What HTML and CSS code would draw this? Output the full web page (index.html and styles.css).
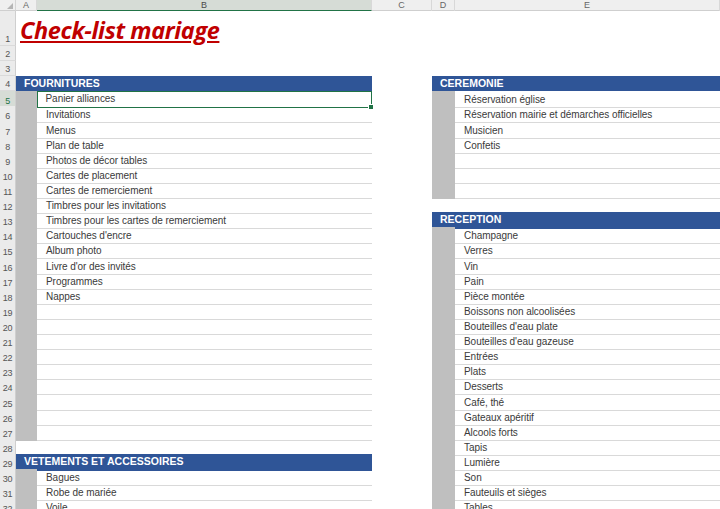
FILE: index.html
```html
<!DOCTYPE html>
<html lang="fr">
<head>
<meta charset="utf-8">
<title>Check-list mariage</title>
<link rel="stylesheet" href="styles.css">
</head>
<body>
<div class="sheet">
  <div class="colhead">
    <div class="corner"><svg width="16" height="11" viewBox="0 0 16 11"><polygon points="13,3 13,9 7,9" fill="#b4b4b4"/></svg></div>
    <div class="ch">A</div><div class="ch sel">B</div><div class="ch">C</div><div class="ch">D</div><div class="ch">E</div>
  </div>

  <div class="row r1"><div class="rh">1</div><div class="c a"><span class="title">Check-list mariage</span></div><div class="c"></div><div class="c"></div><div class="c"></div><div class="c"></div></div>
  <div class="row"><div class="rh">2</div><div class="c"></div><div class="c"></div><div class="c"></div><div class="c"></div><div class="c"></div></div>
  <div class="row"><div class="rh">3</div><div class="c"></div><div class="c"></div><div class="c"></div><div class="c"></div><div class="c"></div></div>
  <div class="row"><div class="rh">4</div><div class="c hdr">FOURNITURES</div><div class="c"></div><div class="c hdr">CEREMONIE</div></div>
  <div class="row"><div class="rh selr">5</div><div class="c gray"></div><div class="c item selcell">Panier alliances<span class="handle"></span></div><div class="c"></div><div class="c gray"></div><div class="c item">Réservation église</div></div>
  <div class="row"><div class="rh">6</div><div class="c gray"></div><div class="c item">Invitations</div><div class="c"></div><div class="c gray"></div><div class="c item">Réservation mairie et démarches officielles</div></div>
  <div class="row"><div class="rh">7</div><div class="c gray"></div><div class="c item">Menus</div><div class="c"></div><div class="c gray"></div><div class="c item">Musicien</div></div>
  <div class="row"><div class="rh">8</div><div class="c gray"></div><div class="c item">Plan de table</div><div class="c"></div><div class="c gray"></div><div class="c item">Confetis</div></div>
  <div class="row"><div class="rh">9</div><div class="c gray"></div><div class="c item">Photos de décor tables</div><div class="c"></div><div class="c gray"></div><div class="c item"></div></div>
  <div class="row"><div class="rh">10</div><div class="c gray"></div><div class="c item">Cartes de placement</div><div class="c"></div><div class="c gray"></div><div class="c item"></div></div>
  <div class="row"><div class="rh">11</div><div class="c gray"></div><div class="c item">Cartes de remerciement</div><div class="c"></div><div class="c gray"></div><div class="c item"></div></div>
  <div class="row"><div class="rh">12</div><div class="c gray"></div><div class="c item">Timbres pour les invitations</div><div class="c"></div><div class="c"></div><div class="c"></div></div>
  <div class="row"><div class="rh">13</div><div class="c gray"></div><div class="c item">Timbres pour les cartes de remerciement</div><div class="c"></div><div class="c hdr">RECEPTION</div></div>
  <div class="row"><div class="rh">14</div><div class="c gray"></div><div class="c item">Cartouches d'encre</div><div class="c"></div><div class="c gray"></div><div class="c item">Champagne</div></div>
  <div class="row"><div class="rh">15</div><div class="c gray"></div><div class="c item">Album photo</div><div class="c"></div><div class="c gray"></div><div class="c item">Verres</div></div>
  <div class="row"><div class="rh">16</div><div class="c gray"></div><div class="c item">Livre d'or des invités</div><div class="c"></div><div class="c gray"></div><div class="c item">Vin</div></div>
  <div class="row"><div class="rh">17</div><div class="c gray"></div><div class="c item">Programmes</div><div class="c"></div><div class="c gray"></div><div class="c item">Pain</div></div>
  <div class="row"><div class="rh">18</div><div class="c gray"></div><div class="c item">Nappes</div><div class="c"></div><div class="c gray"></div><div class="c item">Pièce montée</div></div>
  <div class="row"><div class="rh">19</div><div class="c gray"></div><div class="c item"></div><div class="c"></div><div class="c gray"></div><div class="c item">Boissons non alcoolisées</div></div>
  <div class="row"><div class="rh">20</div><div class="c gray"></div><div class="c item"></div><div class="c"></div><div class="c gray"></div><div class="c item">Bouteilles d'eau plate</div></div>
  <div class="row"><div class="rh">21</div><div class="c gray"></div><div class="c item"></div><div class="c"></div><div class="c gray"></div><div class="c item">Bouteilles d'eau gazeuse</div></div>
  <div class="row"><div class="rh">22</div><div class="c gray"></div><div class="c item"></div><div class="c"></div><div class="c gray"></div><div class="c item">Entrées</div></div>
  <div class="row"><div class="rh">23</div><div class="c gray"></div><div class="c item"></div><div class="c"></div><div class="c gray"></div><div class="c item">Plats</div></div>
  <div class="row"><div class="rh">24</div><div class="c gray"></div><div class="c item"></div><div class="c"></div><div class="c gray"></div><div class="c item">Desserts</div></div>
  <div class="row"><div class="rh">25</div><div class="c gray"></div><div class="c item"></div><div class="c"></div><div class="c gray"></div><div class="c item">Café, thé</div></div>
  <div class="row"><div class="rh">26</div><div class="c gray"></div><div class="c item"></div><div class="c"></div><div class="c gray"></div><div class="c item">Gateaux apéritif</div></div>
  <div class="row"><div class="rh">27</div><div class="c gray"></div><div class="c item"></div><div class="c"></div><div class="c gray"></div><div class="c item">Alcools forts</div></div>
  <div class="row"><div class="rh">28</div><div class="c"></div><div class="c"></div><div class="c"></div><div class="c gray"></div><div class="c item">Tapis</div></div>
  <div class="row"><div class="rh">29</div><div class="c hdr">VETEMENTS ET ACCESSOIRES</div><div class="c"></div><div class="c gray"></div><div class="c item">Lumière</div></div>
  <div class="row"><div class="rh">30</div><div class="c gray"></div><div class="c item">Bagues</div><div class="c"></div><div class="c gray"></div><div class="c item">Son</div></div>
  <div class="row"><div class="rh">31</div><div class="c gray"></div><div class="c item">Robe de mariée</div><div class="c"></div><div class="c gray"></div><div class="c item">Fauteuils et sièges</div></div>
  <div class="row"><div class="rh">32</div><div class="c gray"></div><div class="c item">Voile</div><div class="c"></div><div class="c gray"></div><div class="c item">Tables</div></div>
</div>
</body>
</html>
```

FILE: styles.css
```css
html, body {
  margin: 0;
  padding: 0;
  background: #ffffff;
  overflow: hidden;
}

.sheet {
  width: 720px;
  height: 509px;
  overflow: hidden;
  font-family: "Liberation Sans", Arial, sans-serif;
}

.colhead,
.row {
  display: grid;
  grid-template-columns: 16px 21px 335px 60px 23px 265px;
}

.colhead {
  height: 11px;
  background: #efefef;
  border-bottom: 1px solid #cfcfcf;
  box-sizing: border-box;
}

.corner {
  line-height: 0;
  border-right: 1px solid #d4d4d4;
}

.ch {
  font-size: 9px;
  line-height: 11px;
  color: #666666;
  text-align: center;
  border-right: 1px solid #d8d8d8;
  overflow: hidden;
}

.ch.sel {
  background: #d6dcd6;
  color: #4a4a4a;
  border-bottom: 1px solid #217346;
  height: 11px;
  box-sizing: border-box;
}

.row {
  height: 15.12px;
}

.row.r1 {
  height: 35px;
}

.rh {
  background: #ebebeb;
  border-right: 1px solid #cfcfcf;
  border-bottom: 1px solid #dadada;
  box-sizing: border-box;
  font-size: 9px;
  color: #555555;
  text-align: center;
  display: flex;
  align-items: flex-end;
  justify-content: center;
  padding-bottom: 1px;
  overflow: hidden;
  letter-spacing: -0.3px;
}

.rh.selr {
  background: #d6dcd6;
  color: #217346;
}

.c {
  min-width: 0;
  box-sizing: border-box;
  position: relative;
}

.a {
  overflow: visible;
  white-space: nowrap;
}

.title {
  display: inline-block;
  margin-left: 4px;
  margin-top: 5px;
  font-family: "Open Sans", "Liberation Sans", sans-serif;
  font-weight: 700;
  font-style: italic;
  font-size: 23.5px;
  line-height: 28px;
  color: #c00000;
  text-decoration: underline;
  text-decoration-thickness: 1.5px;
  text-underline-offset: 2px;
  letter-spacing: -0.4px;
}

.hdr {
  grid-column: span 2;
  background: #2f5597;
  color: #ffffff;
  font-weight: 700;
  font-size: 10.5px;
  line-height: 15px;
  padding-left: 8px;
  white-space: nowrap;
  overflow: hidden;
}

.gray {
  background: #bfbfbf;
}

.item {
  border-bottom: 1px solid #d9d9d9;
  font-size: 10px;
  line-height: 15px;
  padding-top: 1px;
  color: #3a3a3a;
  padding-left: 9px;
  white-space: nowrap;
  overflow: visible;
  letter-spacing: -0.05px;
}

.selcell {
  border: 1.5px solid #217346;
  line-height: 12px;
  padding-top: 0.5px;
  padding-left: 7.5px;
}

.handle {
  position: absolute;
  right: -3px;
  bottom: -3px;
  width: 4px;
  height: 4px;
  background: #217346;
  border: 1px solid #ffffff;
}
```
